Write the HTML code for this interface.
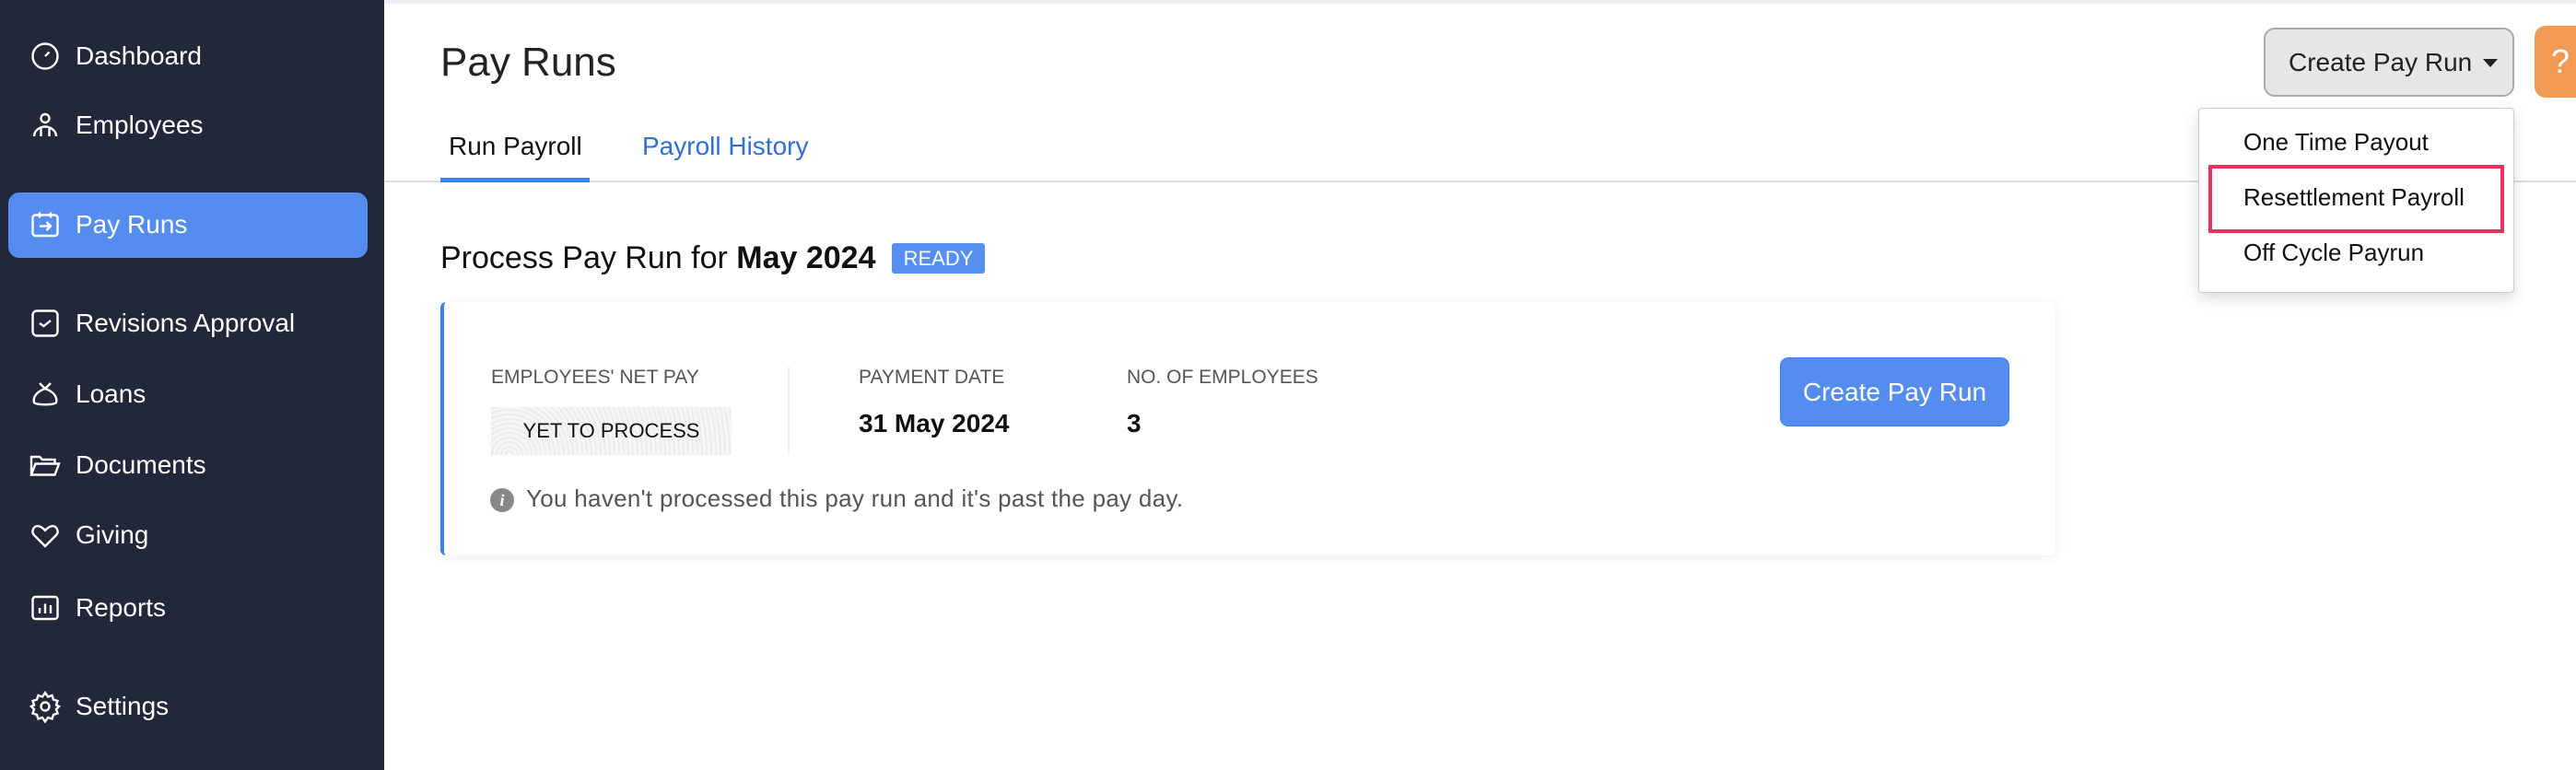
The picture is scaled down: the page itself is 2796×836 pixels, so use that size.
<!DOCTYPE html>
<html><head><meta charset="utf-8"><style>
*{box-sizing:border-box;margin:0;padding:0}
body{width:2796px;height:836px;overflow:hidden;background:#fff;font-family:"Liberation Sans",sans-serif;position:relative}
.sb{position:absolute;left:0;top:0;width:417px;height:836px;background:#22273a}
.it{position:absolute;left:0;width:417px;height:48px;color:#fff;font-size:28px;display:flex;align-items:center}
.it svg{position:absolute;left:31px;width:36px;height:36px;top:6px}
.it span{position:absolute;left:82px}
.act{position:absolute;left:9px;top:209px;width:390px;height:71px;background:#558cf0;border-radius:12px}
.a{position:absolute;white-space:nowrap}
.lbl{font-size:21px;color:#555;top:398px}
.val{font-size:28px;color:#111;top:444px;font-weight:bold}
</style></head><body>
<div class="sb">
<div class="act"></div>
<div class="it" style="top:37px"><svg viewBox="0 0 24 24" fill="none" stroke="#fff" stroke-width="1.6"><circle cx="12" cy="12" r="9"/><path d="M12 12l3-3"/></svg><span>Dashboard</span></div>
<div class="it" style="top:112px"><svg viewBox="0 0 24 24" fill="none" stroke="#fff" stroke-width="1.6"><circle cx="12" cy="7" r="3"/><path d="M4 20c0-4 4-7 8-7s8 3 8 7M9 14v6M15 14v6"/></svg><span>Employees</span></div>
<div class="it" style="top:220px"><svg viewBox="0 0 24 24" fill="none" stroke="#fff" stroke-width="1.6"><rect x="3" y="5" width="18" height="15" rx="2"/><path d="M8 3v4M16 3v4M8 13h8M13 10l3 3-3 3"/></svg><span>Pay Runs</span></div>
<div class="it" style="top:327px"><svg viewBox="0 0 24 24" fill="none" stroke="#fff" stroke-width="1.6"><rect x="3" y="3" width="18" height="18" rx="3"/><path d="M8 12l3 2 5-4"/></svg><span>Revisions Approval</span></div>
<div class="it" style="top:404px"><svg viewBox="0 0 24 24" fill="none" stroke="#fff" stroke-width="1.6"><path d="M8 4l4 4 4-4M12 8c-6 2-9 6-8 10 1 2 15 2 16 0 1-4-2-8-8-10z"/></svg><span>Loans</span></div>
<div class="it" style="top:481px"><svg viewBox="0 0 24 24" fill="none" stroke="#fff" stroke-width="1.6"><path d="M2 19V6h6l2 2h9v3M2 19l3-8h17l-3 8z"/></svg><span>Documents</span></div>
<div class="it" style="top:557px"><svg viewBox="0 0 24 24" fill="none" stroke="#fff" stroke-width="1.6"><path d="M12 20l-8-8c-2-2-1-6 2-6.5 2-.3 4 1 6 3 2-2 4-3.3 6-3 3 .5 4 4.5 2 6.5z"/></svg><span>Giving</span></div>
<div class="it" style="top:636px"><svg viewBox="0 0 24 24" fill="none" stroke="#fff" stroke-width="1.6"><rect x="3" y="4" width="18" height="16" rx="2"/><path d="M8 16v-4M12 16V9M16 16v-6"/></svg><span>Reports</span></div>
<div class="it" style="top:743px"><svg viewBox="0 0 24 24" fill="none" stroke="#fff" stroke-width="1.6"><circle cx="12" cy="12" r="3"/><path d="M12 2l2 3 3-1 1 3 3 1-1 3 2 1-2 2 1 3-3 1-1 3-3-1-2 3-2-3-3 1-1-3-3-1 1-3-2-2 2-1-1-3 3-1 1-3 3 1z"/></svg><span>Settings</span></div>
</div>

<div class="a" style="left:417px;top:0;width:2379px;height:4px;background:#eef0f4"></div>
<div class="a" style="left:478px;top:43px;font-size:44px;color:#222">Pay Runs</div>
<div class="a" style="left:487px;top:143px;font-size:28px;color:#111">Run Payroll</div>
<div class="a" style="left:697px;top:143px;font-size:28px;color:#2f6fd6">Payroll History</div>
<div class="a" style="left:417px;top:196px;width:2379px;height:2px;background:#ddd"></div>
<div class="a" style="left:478px;top:193px;width:162px;height:5px;background:#3b82f0"></div>

<div class="a" style="left:478px;top:261px;font-size:34px;color:#111">Process Pay Run for <b style="font-weight:600">May 2024</b></div>
<div class="a" style="left:968px;top:264px;width:101px;height:33px;background:#5590f0;border-radius:3px;color:#fff;font-size:22px;text-align:center;line-height:33px">READY</div>

<div class="a" style="left:478px;top:328px;width:1753px;height:275px;background:#fff;border-left:4px solid #3b82f0;border-radius:6px;box-shadow:0 2px 14px rgba(0,0,0,.07)"></div>
<div class="a lbl" style="left:533px">EMPLOYEES' NET PAY</div>
<div class="a lbl" style="left:932px">PAYMENT DATE</div>
<div class="a lbl" style="left:1223px">NO. OF EMPLOYEES</div>
<div class="a" style="left:855px;top:398px;width:2px;height:96px;background:#f0f0f0"></div>
<div class="a" style="left:533px;top:442px;width:261px;height:52px;background:repeating-radial-gradient(circle at 20px 52px,#f6f6f6 0 3px,#ececec 3px 5px);font-size:22px;color:#111;text-align:center;line-height:52px">YET TO PROCESS</div>
<div class="a val" style="left:932px">31 May 2024</div>
<div class="a val" style="left:1223px">3</div>
<div class="a" style="left:532px;top:530px;width:26px;height:26px;border-radius:50%;background:#888;color:#fff;font:italic bold 18px 'Liberation Serif',serif;text-align:center;line-height:26px">i</div>
<div class="a" style="left:571px;top:526px;font-size:26px;color:#555;letter-spacing:0.3px">You haven't processed this pay run and it's past the pay day.</div>
<div class="a" style="left:1932px;top:388px;width:249px;height:75px;background:#558cf0;border:1px solid #3a80f0;border-radius:9px;color:#fff;font-size:28px;text-align:center;line-height:73px">Create Pay Run</div>

<div class="a" style="left:2457px;top:30px;width:272px;height:75px;background:#e6e6e6;border:2px solid #aaa;border-radius:12px;font-size:28px;color:#222;line-height:71px;padding-left:25px">Create Pay Run <span style="display:inline-block;border:8px solid transparent;border-top:9px solid #222;vertical-align:-4px;margin-left:4px"></span></div>
<div class="a" style="left:2751px;top:28px;width:60px;height:78px;background:#f09a55;border-radius:12px;color:#fff;font-size:36px;line-height:78px;padding-left:18px">?</div>
<div class="a" style="left:2386px;top:117px;width:343px;height:201px;background:#fff;border:1px solid #ccc;border-radius:4px;box-shadow:0 6px 16px rgba(0,0,0,.15)"></div>
<div class="a" style="left:2435px;top:139px;font-size:26px;color:#111">One Time Payout</div>
<div class="a" style="left:2397px;top:179px;width:321px;height:74px;border:4px solid #e8325a"></div>
<div class="a" style="left:2435px;top:199px;font-size:26px;color:#111">Resettlement Payroll</div>
<div class="a" style="left:2435px;top:259px;font-size:26px;color:#111">Off Cycle Payrun</div>
</body></html>
